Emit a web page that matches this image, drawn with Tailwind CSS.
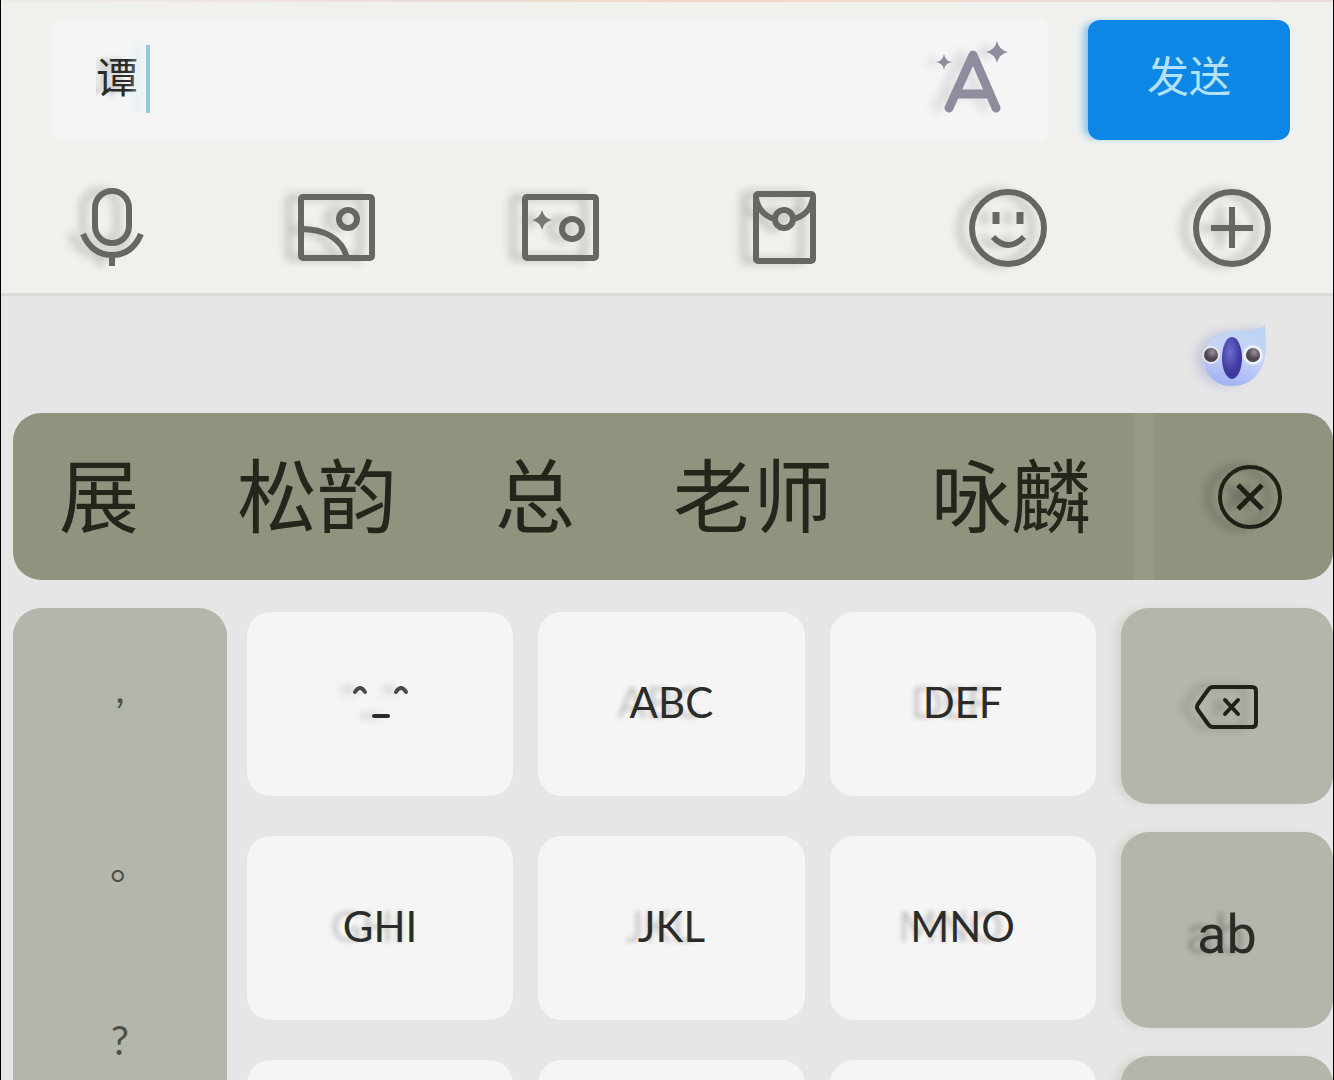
<!DOCTYPE html>
<html lang="zh-CN">
<head>
<meta charset="utf-8">
<meta name="viewport" content="width=device-width, initial-scale=1">
<title>聊天输入</title>
<script src="https://cdn.jsdelivr.net/npm/@tailwindcss/browser@4"></script>
</head>
<body class="bg-[#e6e6e6]">
<div class="flex h-screen flex-col overflow-hidden border-x border-black font-['Lato','Noto_Sans_CJK_SC',sans-serif] text-[#2b2c28]">

  <!-- Message composer -->
  <header class="shrink-0 border-b-3 border-[#dbdbd8] bg-[#f0f1ec]">
    <div class="h-0.5 bg-linear-to-r from-[#ecebe8] via-[#f0d5cc] to-[#eed8d4]"></div>
    <form class="flex gap-10 pt-[18px] pr-[43px] pl-[51px]">
      <div class="relative flex h-[120px] flex-1 items-center rounded-lg bg-[#f5f5f5] pr-9 pl-11">
        <input aria-label="消息" value="谭" class="h-20 min-w-0 flex-1 bg-transparent pb-3 text-[42px] outline-none [text-shadow:-12px_0_5px_rgba(0,0,0,0.2)]">
        <span class="absolute top-[25px] left-[94px] h-[68px] w-1 bg-[#8fcbdc] shadow-[-10px_0_8px_#d8edf3]"></span>
        <button type="button" aria-label="智能写作" class="drop-shadow-[-12px_0_4px_rgba(80,75,100,0.15)]">
          <svg class="h-20 w-20" viewBox="0 0 80 80" fill="none" stroke="#908c9f" stroke-width="9" stroke-linecap="round" stroke-linejoin="round">
            <path d="M17 68L41 15L64 68M26 54H55"/>
            <path d="M12 14Q13 21 20 22Q13 23 12 30Q11 23 4 22Q11 21 12 14ZM65 1Q67 10 76 12Q67 14 65 23Q63 14 54 12Q63 10 65 1Z" fill="#908c9f" stroke="none"/>
          </svg>
        </button>
      </div>
      <button type="submit" class="h-[120px] w-[202px] rounded-xl bg-[#0c87e6] pb-2 text-[42px] text-[#b5e2fa] shadow-[-7px_0_7px_-2px_#8fc5ea]">发送</button>
    </form>
    <nav aria-label="附件" class="flex items-center justify-between pt-12 pr-[61px] pb-[25px] pl-[71px]">
      <button aria-label="语音" class="drop-shadow-[-12px_0_4px_rgba(0,0,0,0.2)]">
        <svg class="h-20 w-20" viewBox="0 0 80 80" fill="none" stroke="#666760" stroke-width="6">
          <rect x="23" y="3" width="34" height="52" rx="17"/><path d="M11 46C17 60 27 67 40 67S63 60 69 46M40 68V78"/>
        </svg>
      </button>
      <button aria-label="图片" class="drop-shadow-[-12px_0_4px_rgba(0,0,0,0.2)]">
        <svg class="h-20 w-20" viewBox="0 0 80 80" fill="none" stroke="#666760" stroke-width="6">
          <rect x="5" y="9" width="71" height="61" rx="2"/><circle cx="52" cy="31" r="9"/><path d="M5 41C28 41 46 50 51 70"/>
        </svg>
      </button>
      <button aria-label="拍摄" class="drop-shadow-[-12px_0_4px_rgba(0,0,0,0.2)]">
        <svg class="h-20 w-20" viewBox="0 0 80 80" fill="none" stroke="#666760" stroke-width="6">
          <rect x="5" y="9" width="71" height="61" rx="2"/><circle cx="52" cy="41" r="10"/><path d="M22 22Q24 30 32 32Q24 34 22 42Q20 34 12 32Q20 30 22 22Z" fill="#777871" stroke="none"/>
        </svg>
      </button>
      <button aria-label="红包" class="drop-shadow-[-12px_0_4px_rgba(0,0,0,0.2)]">
        <svg class="h-20 w-20" viewBox="0 0 80 80" fill="none" stroke="#666760" stroke-width="6">
          <rect x="12" y="6" width="57" height="67" rx="2"/><circle cx="40" cy="31" r="9"/><path d="M12 10C14 22 22 29 31 31M69 10C67 22 59 29 49 31"/>
        </svg>
      </button>
      <button aria-label="表情" class="drop-shadow-[-12px_0_4px_rgba(0,0,0,0.2)]">
        <svg class="h-20 w-20" viewBox="0 0 80 80" fill="none" stroke="#666760" stroke-width="6">
          <circle cx="40" cy="40" r="36"/><path d="M28 24V36M52 24V36" stroke-width="7"/><path d="M25 49Q40 65 56 49"/>
        </svg>
      </button>
      <button aria-label="更多" class="drop-shadow-[-12px_0_4px_rgba(0,0,0,0.2)]">
        <svg class="h-20 w-20" viewBox="0 0 80 80" fill="none" stroke="#666760" stroke-width="6">
          <circle cx="40" cy="40" r="36"/><path d="M19 40H61M40 19V60"/>
        </svg>
      </button>
    </nav>
  </header>

  <!-- Keyboard -->
  <main class="flex-1 pl-3">
    <div class="flex h-[117px] items-center justify-end pr-[61px]">
      <button aria-label="输入法助手" class="drop-shadow-[-8px_0_5px_rgba(80,90,180,0.2)]">
        <svg class="h-20 w-20" viewBox="0 0 80 80">
          <defs>
            <linearGradient id="fur" x1="0.7" y1="0" x2="0.4" y2="1"><stop offset="0" stop-color="#bcd3f3"/><stop offset="0.5" stop-color="#c6d5f8"/><stop offset="1" stop-color="#a3b2f2"/></linearGradient>
            <radialGradient id="nose" cx="0.4" cy="0.35"><stop offset="0" stop-color="#6c6cd2"/><stop offset="1" stop-color="#40399f"/></radialGradient>
            <radialGradient id="eye" cx="0.6" cy="0.3"><stop offset="0" stop-color="#9b8f9a"/><stop offset="1" stop-color="#4a4350"/></radialGradient>
          </defs>
          <path d="M73 9C74 25 75 42 70 52C64 64 54 71 40 71C24 71 12 60 12 44C12 30 22 18 38 16C54 15 66 16 73 9Z" fill="url(#fur)"/>
          <circle cx="19" cy="40" r="9" fill="#e4e3ee"/><circle cx="61" cy="40" r="10" fill="#eef0f8"/>
          <circle cx="19" cy="40" r="7" fill="url(#eye)"/><circle cx="61" cy="40" r="7" fill="url(#eye)"/>
          <ellipse cx="40" cy="43" rx="10" ry="21" fill="url(#nose)"/>
        </svg>
      </button>
    </div>

    <div class="flex h-[167px] overflow-hidden rounded-[28px] bg-[#90947e]">
      <div class="flex flex-1 items-center gap-[98px] border-r-20 border-[#969a85] pb-1 pl-[46px] text-[80px] leading-none whitespace-nowrap text-[#24261c] [text-shadow:-12px_0_6px_rgba(0,0,0,0.2)]">
        <button>展</button>
        <button>松韵</button>
        <button>总</button>
        <button>老师</button>
        <button>咏麟</button>
      </div>
      <button aria-label="清除" class="flex w-[179px] items-center justify-center pl-3">
        <svg class="h-[68px] w-[68px] drop-shadow-[-12px_0_4px_rgba(0,0,0,0.3)]" viewBox="0 0 68 68" fill="none" stroke="#1f2117" stroke-width="4">
          <circle cx="34" cy="34" r="30"/><path d="M22 22L46 46M46 22L22 46" stroke-width="5"/>
        </svg>
      </button>
    </div>

    <div class="flex gap-5 pt-7">
      <div class="flex w-[214px] flex-col rounded-t-[28px] bg-[#b3b6ab] text-[40px] text-[#4d5048] [text-shadow:-12px_0_5px_rgba(0,0,0,0.2)]">
        <button class="h-44 pb-4">,</button>
        <button class="h-44 pb-4 pl-5">。</button>
        <button class="h-44 pb-4">?</button>
      </div>
      <div class="grid flex-1 auto-rows-[196px] grid-cols-[266fr_266fr_266fr_212fr] gap-x-[25px] gap-y-7 text-[42px]">
        <button aria-label="颜文字" class="mt-1 mb-2 flex items-center justify-center rounded-3xl bg-[#f5f5f5]">
          <svg class="h-10 w-20 drop-shadow-[-12px_0_4px_rgba(0,0,0,0.2)]" viewBox="0 0 80 40" fill="none" stroke="#4a4a4a" stroke-width="4" stroke-linecap="round">
            <path d="M15 8Q20 0 25 8M56 8Q61 0 66 8"/><path d="M34 32H48" stroke="#2b2b2b"/>
          </svg>
        </button>
        <button class="mt-1 mb-2 rounded-3xl bg-[#f5f5f5] pb-1 [text-shadow:-12px_0_5px_rgba(0,0,0,0.2)]">ABC</button>
        <button class="mt-1 mb-2 rounded-3xl bg-[#f5f5f5] pb-1 [text-shadow:-12px_0_5px_rgba(0,0,0,0.2)]">DEF</button>
        <button aria-label="删除" class="flex items-center justify-center rounded-[28px] bg-[#b3b6ab] shadow-[-8px_0_8px_-2px_#d3d5cd]">
          <svg class="h-12 w-16 drop-shadow-[-12px_0_4px_rgba(0,0,0,0.2)]" viewBox="0 0 64 48" fill="none" stroke="#1f211c" stroke-width="4" stroke-linejoin="round" stroke-linecap="round">
            <path d="M18 5H57Q61 5 61 9V41Q61 45 57 45H18Q15 45 13 42L3 28Q1 25 3 22L13 8Q15 5 18 5Z"/><path d="M30 18L43 32M43 18L30 32"/>
          </svg>
        </button>
        <button class="mt-1 mb-2 rounded-3xl bg-[#f5f5f5] pb-1 [text-shadow:-12px_0_5px_rgba(0,0,0,0.2)]">GHI</button>
        <button class="mt-1 mb-2 rounded-3xl bg-[#f5f5f5] pb-1 [text-shadow:-12px_0_5px_rgba(0,0,0,0.2)]">JKL</button>
        <button class="mt-1 mb-2 rounded-3xl bg-[#f5f5f5] pb-1 [text-shadow:-12px_0_5px_rgba(0,0,0,0.2)]">MNO</button>
        <button class="rounded-[28px] bg-[#b3b6ab] pt-2 font-['Roboto',sans-serif] text-[54px] shadow-[-8px_0_8px_-2px_#d3d5cd] [text-shadow:-12px_0_5px_rgba(0,0,0,0.2)]">ab</button>
        <div class="mt-1 mb-2 rounded-3xl bg-[#f5f5f5]"></div>
        <div class="mt-1 mb-2 rounded-3xl bg-[#f5f5f5]"></div>
        <div class="mt-1 mb-2 rounded-3xl bg-[#f5f5f5]"></div>
        <div class="rounded-[28px] bg-[#b3b6ab] shadow-[-8px_0_8px_-2px_#d3d5cd]"></div>
      </div>
    </div>
  </main>
</div>
</body>
</html>
